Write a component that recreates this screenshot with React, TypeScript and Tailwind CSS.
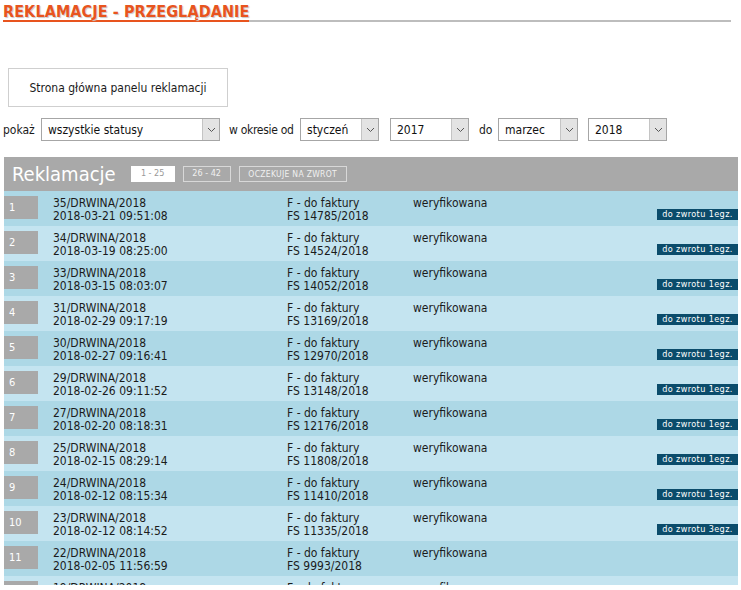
import { Fragment } from 'react'

type Row = {
  no: string
  date: string
  doc: string
  zwrot?: string
}

const rows: Row[] = [
  { no: '35/DRWINA/2018', date: '2018-03-21 09:51:08', doc: 'FS 14785/2018', zwrot: '1egz.' },
  { no: '34/DRWINA/2018', date: '2018-03-19 08:25:00', doc: 'FS 14524/2018', zwrot: '1egz.' },
  { no: '33/DRWINA/2018', date: '2018-03-15 08:03:07', doc: 'FS 14052/2018', zwrot: '1egz.' },
  { no: '31/DRWINA/2018', date: '2018-02-29 09:17:19', doc: 'FS 13169/2018', zwrot: '1egz.' },
  { no: '30/DRWINA/2018', date: '2018-02-27 09:16:41', doc: 'FS 12970/2018', zwrot: '1egz.' },
  { no: '29/DRWINA/2018', date: '2018-02-26 09:11:52', doc: 'FS 13148/2018', zwrot: '1egz.' },
  { no: '27/DRWINA/2018', date: '2018-02-20 08:18:31', doc: 'FS 12176/2018', zwrot: '1egz.' },
  { no: '25/DRWINA/2018', date: '2018-02-15 08:29:14', doc: 'FS 11808/2018', zwrot: '1egz.' },
  { no: '24/DRWINA/2018', date: '2018-02-12 08:15:34', doc: 'FS 11410/2018', zwrot: '1egz.' },
  { no: '23/DRWINA/2018', date: '2018-02-12 08:14:52', doc: 'FS 11335/2018', zwrot: '3egz.' },
  { no: '22/DRWINA/2018', date: '2018-02-05 11:56:59', doc: 'FS 9993/2018' },
  { no: '19/DRWINA/2018', date: '2018-01-30 10:02:11', doc: 'FS 9412/2018' },
]

const font = { fontFamily: 'Tahoma, "DejaVu Sans Condensed", "DejaVu Sans", sans-serif' }

function Chevron() {
  return (
    <svg width="9" height="6" viewBox="0 0 9 6" fill="none">
      <path d="M1 1l3.5 3.5L8 1" stroke="#555" strokeWidth="1" />
    </svg>
  )
}

function FakeSelect({ value, width }: { value: string; width: string }) {
  return (
    <div className={`flex h-[23px] shrink-0 items-stretch border border-[#a6a6a6] bg-white ${width}`}>
      <span className="flex flex-1 items-center pl-[6px] text-[12px] text-[#111]">{value}</span>
      <span className="flex w-[17px] items-center justify-center border-l border-[#c4c4c4] bg-[#e3e3e3]">
        <Chevron />
      </span>
    </div>
  )
}

export default function App() {
  return (
    <div className="h-[585px] overflow-hidden bg-white text-[#1b1b1b]" style={font}>
      <div className="ml-[3px] mr-[10px] mt-[4px] flex border-b-2 border-[#bdbdbd]">
        <span className="-mb-[2px] border-b-2 border-[#e8541e] text-[16px] font-bold leading-[16px] tracking-[0.1px] text-[#e8541e] [text-shadow:1px_1px_1px_#c8c8c8]">
          REKLAMACJE - PRZEGLĄDANIE
        </span>
      </div>

      <div className="ml-[8px] mt-[46px] flex h-[39px] w-[220px] items-center justify-center border border-[#cfcfcf] text-[12px]">
        Strona główna panelu reklamacji
      </div>

      <div className="mt-[11px] flex items-center pl-[3px] text-[12px]">
        <span className="w-[38px] shrink-0">pokaż</span>
        <FakeSelect value="wszystkie statusy" width="w-[179px]" />
        <span className="w-[80px] shrink-0 pl-[9px] tracking-[-0.3px]">w okresie od</span>
        <FakeSelect value="styczeń" width="w-[79px]" />
        <span className="w-[11px] shrink-0" />
        <FakeSelect value="2017" width="w-[79px]" />
        <span className="w-[29px] shrink-0 pl-[10px]">do</span>
        <FakeSelect value="marzec" width="w-[80px]" />
        <span className="w-[10px] shrink-0" />
        <FakeSelect value="2018" width="w-[79px]" />
      </div>

      <div className="ml-[4px] mr-[3px] mt-[16px]">
        <div className="flex h-[34px] items-center bg-[#a9a9a9] pl-[8px]">
          <span className="text-[20px] leading-none text-white">Reklamacje</span>
          <span className="ml-[15px] flex h-[16px] w-[44px] items-center justify-center bg-white text-[9px] text-[#999999]">
            1 - 25
          </span>
          <span className="ml-[8px] flex h-[16px] w-[48px] items-center justify-center border border-[#d8d8d8] text-[9px] text-[#f0f0f0]">
            26 - 42
          </span>
          <span className="ml-[8px] flex h-[16px] w-[108px] items-center justify-center border border-[#d8d8d8] text-[8.5px] tracking-[0.3px] text-[#f0f0f0]">
            OCZEKUJE NA ZWROT
          </span>
        </div>

        {rows.map((r, i) => (
          <Fragment key={r.no}>
            <div
              className={`flex h-[35px] items-start text-[12px] leading-[13px] ${
                i % 2 === 0 ? 'bg-[#add8e6]' : 'bg-[#c4e4f0]'
              }`}
            >
              <div className="mt-[5px] flex h-[23px] w-[34px] items-center bg-[#a9a9a9] pl-[5px] text-[11px] text-white">
                {i + 1}
              </div>
              <div className="ml-[15px] mt-[6px] w-[234px]">
                <div>{r.no}</div>
                <div>{r.date}</div>
              </div>
              <div className="mt-[6px] w-[126px]">
                <div>F - do faktury</div>
                <div>{r.doc}</div>
              </div>
              <div className="mt-[6px] flex-1">weryfikowana</div>
              {r.zwrot && (
                <div className="mb-[6px] flex h-[11px] w-[81px] items-center justify-center self-end bg-[#0b4c6b] text-[9px] leading-none tracking-[0.4px] text-white">
                  do zwrotu {r.zwrot}
                </div>
              )}
            </div>
          </Fragment>
        ))}
      </div>
    </div>
  )
}
